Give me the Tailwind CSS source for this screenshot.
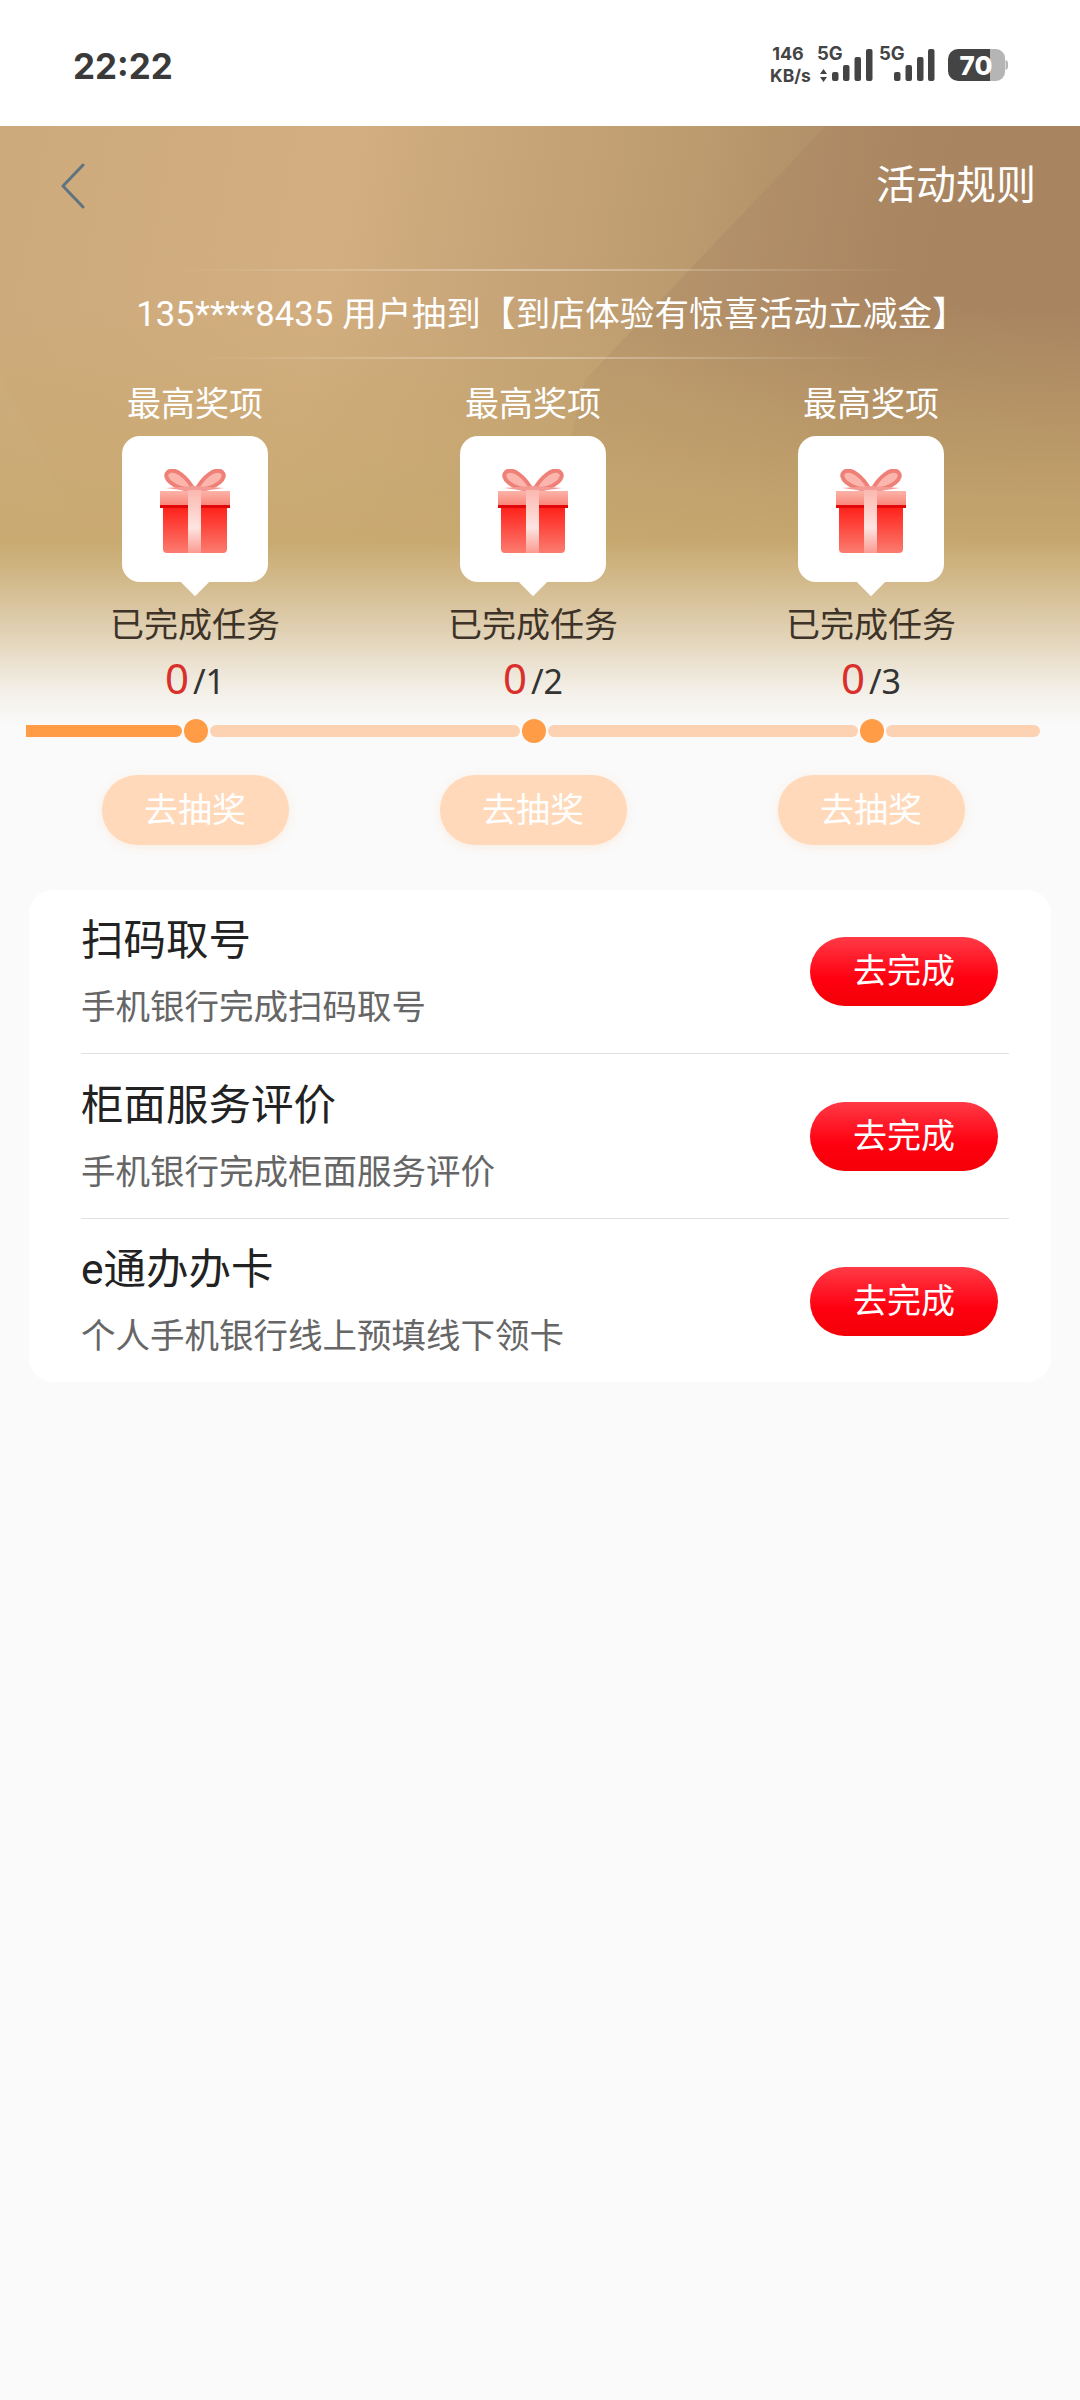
<!DOCTYPE html>
<html lang="zh-CN">
<head>
  <meta charset="UTF-8" />
  <meta name="viewport" content="width=device-width, initial-scale=1.0" />
  <title>活动任务</title>
  <script src="https://cdn.jsdelivr.net/npm/@tailwindcss/browser@4"></script>
</head>
<body class="bg-[#fafafa] min-h-[2400px] font-['Roboto','Noto_Sans_CJK_SC',sans-serif]">
  <!-- Status bar -->
  <div class="h-[126px] bg-white flex items-center justify-between pl-[73px] pr-[40px]">
    <span class="text-[35px] font-bold text-[#3a3a3a] font-['Inter','Roboto',sans-serif] mt-[6px]">22:22</span>
    <svg width="300" height="70" viewBox="0 0 300 70" class="mb-[16px]">
      <g fill="#444" font-family="Inter, Roboto, sans-serif" font-weight="700">
        <text x="48" y="40" font-size="18" text-anchor="middle">146</text>
        <text x="50.5" y="62" font-size="17.5" text-anchor="middle">KB/s</text>
        <text x="77" y="40" font-size="18.5">5G</text>
        <path d="M83.5 49l3.5 5h-7zM83.5 62l3.5-5h-7z"/>
        <rect x="92" y="52" width="6.5" height="9" rx="2"/>
        <rect x="103" y="45" width="6.5" height="16" rx="2"/>
        <rect x="114.5" y="37" width="6.5" height="24" rx="2"/>
        <rect x="126" y="29" width="6.5" height="32" rx="2"/>
        <text x="139" y="40" font-size="18.5">5G</text>
        <rect x="154" y="52" width="6.5" height="9" rx="2"/>
        <rect x="165.5" y="45" width="6.5" height="16" rx="2"/>
        <rect x="177" y="37" width="6.5" height="24" rx="2"/>
        <rect x="188" y="29" width="6.5" height="32" rx="2"/>
      </g>
      <path d="M250 29h6a9 9 0 0 1 9 9v14a9 9 0 0 1-9 9h-6z" fill="#b5b5b5"/>
      <path d="M265.5 40a3 3 0 0 1 2.5 3v4a3 3 0 0 1-2.5 3z" fill="#b5b5b5"/>
      <path d="M250 29h-32a10 10 0 0 0-10 10v12a10 10 0 0 0 10 10h32z" fill="#444"/>
      <text x="236" y="54.5" font-size="26" font-weight="800" fill="#fff" text-anchor="middle" font-family="Inter, Roboto, sans-serif">70</text>
    </svg>
  </div>

  <!-- Hero -->
  <section class="relative h-[600px] bg-[linear-gradient(100deg,#cdaa7c_0%,#d2ae80_30%,#bd9c70_58%,#ab8862_78%,#a98560_100%)]">
    <svg class="absolute inset-0 pointer-events-none" width="1080" height="600" viewBox="0 0 1080 600">
      <defs>
        <linearGradient id="gold" x1="0" y1="0" x2="0" y2="1">
          <stop offset="0.3" stop-color="#c8a96f" stop-opacity="0"/>
          <stop offset="0.72" stop-color="#c8a96f" stop-opacity="1"/>
        </linearGradient>
      </defs>
      <path d="M826 0L585 254L500 600H1080V0z" fill="#a58260" opacity="0.3"/>
      <path d="M0 250L80 400V600H0z" fill="#fff" opacity="0.04"/>
      <rect width="1080" height="600" fill="url(#gold)"/>
    </svg>
    <div class="absolute inset-0 bg-[linear-gradient(180deg,rgba(250,250,250,0)_415px,rgba(250,250,250,0.18)_450px,rgba(250,250,250,0.4)_490px,rgba(250,250,250,0.65)_530px,rgba(250,250,250,0.87)_565px,#fafafa_600px)]"></div>

    <div class="relative">
      <div class="flex items-center justify-between h-[120px] pl-[58px] pr-[44px]">
        <svg width="30" height="46" viewBox="0 0 30 46"><path d="M25 2L5 23l20 21" fill="none" stroke="#5f7480" stroke-width="3" stroke-linecap="round" stroke-linejoin="round"/></svg>
        <span class="text-[40px] text-white">活动规则</span>
      </div>

      <div class="flex flex-col items-center mt-[23px]">
        <div class="w-[750px] h-[2px] bg-[linear-gradient(90deg,transparent,rgba(255,255,255,0.35),transparent)]"></div>
        <p class="h-[86px] leading-[86px] text-[34.5px] tracking-[0.2px] text-white whitespace-nowrap ml-[23px]">135****8435 用户抽到【到店体验有惊喜活动立减金】</p>
        <div class="w-[700px] h-[2px] bg-[linear-gradient(90deg,transparent,rgba(255,255,255,0.35),transparent)]"></div>
      </div>

      <div class="grid grid-cols-3 w-[1014px] ml-[26px] mt-[21px]">
        <div class="flex flex-col items-center">
          <span class="text-[34px] leading-[48px] text-white">最高奖项</span>
          <div class="relative mt-[8px] w-[146px] h-[146px] bg-white rounded-[18px] flex items-center justify-center">
            <svg width="72" height="84" viewBox="0 0 72 84" class="mt-[4px]">
              <defs>
                <linearGradient id="box" x1="0" y1="0" x2="0" y2="1"><stop offset="0" stop-color="#ff1f18"/><stop offset="1" stop-color="#fb7c70"/></linearGradient>
                <linearGradient id="band" x1="0" y1="0" x2="0" y2="1"><stop offset="0" stop-color="#fbb8b0"/><stop offset="0.6" stop-color="#fde4e0"/><stop offset="1" stop-color="#fb9a90"/></linearGradient>
                <linearGradient id="lid" x1="0" y1="0" x2="0" y2="1"><stop offset="0" stop-color="#fbb3a8"/><stop offset="1" stop-color="#fb7d72"/></linearGradient>
              </defs>
              <g id="gift">
                <path d="M35 21C28 8 16-2 9 3c-6 5 4 17 26 18zM37 21C44 8 56-2 63 3c6 5-4 17-26 18z" fill="#fbb5ac" stroke="#ee8078" stroke-width="4"/>
                <path d="M7 19l28-2 30 2-28 4z" fill="#f49a94"/>
                <rect x="1" y="22" width="70" height="17" fill="url(#lid)"/>
                <path d="M4 37h64v43a4 4 0 0 1-4 4H8a4 4 0 0 1-4-4z" fill="url(#box)"/>
                <rect x="1" y="36" width="70" height="3" fill="#e00808"/>
                <rect x="29" y="21" width="13" height="63" fill="url(#band)"/>
              </g>
            </svg>
            <div class="absolute bottom-[-10px] left-1/2 -translate-x-1/2 w-[20px] h-[20px] rotate-45 bg-white"></div>
          </div>
          <span class="mt-[19px] text-[34px] leading-[48px] text-[#3d3328]">已完成任务</span>
          <div class="h-[58px] flex items-baseline text-[#333] font-['Noto_Sans',sans-serif]"><span class="text-[42px] leading-[58px] text-[#d9302c]">0</span><span class="text-[34px] ml-[4px]">/1</span></div>
        </div>
        <div class="flex flex-col items-center">
          <span class="text-[34px] leading-[48px] text-white">最高奖项</span>
          <div class="relative mt-[8px] w-[146px] h-[146px] bg-white rounded-[18px] flex items-center justify-center">
            <svg width="72" height="84" viewBox="0 0 72 84" class="mt-[4px]"><use href="#gift"/></svg>
            <div class="absolute bottom-[-10px] left-1/2 -translate-x-1/2 w-[20px] h-[20px] rotate-45 bg-white"></div>
          </div>
          <span class="mt-[19px] text-[34px] leading-[48px] text-[#3d3328]">已完成任务</span>
          <div class="h-[58px] flex items-baseline text-[#333] font-['Noto_Sans',sans-serif]"><span class="text-[42px] leading-[58px] text-[#d9302c]">0</span><span class="text-[34px] ml-[4px]">/2</span></div>
        </div>
        <div class="flex flex-col items-center">
          <span class="text-[34px] leading-[48px] text-white">最高奖项</span>
          <div class="relative mt-[8px] w-[146px] h-[146px] bg-white rounded-[18px] flex items-center justify-center">
            <svg width="72" height="84" viewBox="0 0 72 84" class="mt-[4px]"><use href="#gift"/></svg>
            <div class="absolute bottom-[-10px] left-1/2 -translate-x-1/2 w-[20px] h-[20px] rotate-45 bg-white"></div>
          </div>
          <span class="mt-[19px] text-[34px] leading-[48px] text-[#3d3328]">已完成任务</span>
          <div class="h-[58px] flex items-baseline text-[#333] font-['Noto_Sans',sans-serif]"><span class="text-[42px] leading-[58px] text-[#d9302c]">0</span><span class="text-[34px] ml-[4px]">/3</span></div>
        </div>
      </div>

      <!-- Progress -->
      <div class="flex items-center w-[1014px] h-[24px] ml-[26px] mt-[12px]">
        <div class="w-[156px] h-[12px] bg-[#ff9c45] rounded-r-[6px]"></div>
        <div class="w-[24px] h-[24px] rounded-full bg-[#ff9c45] mx-[2px] shrink-0"></div>
        <div class="w-[310px] h-[12px] bg-[#fdd2b2] rounded-[6px]"></div>
        <div class="w-[24px] h-[24px] rounded-full bg-[#ff9c45] mx-[2px] shrink-0"></div>
        <div class="w-[310px] h-[12px] bg-[#fdd2b2] rounded-[6px]"></div>
        <div class="w-[24px] h-[24px] rounded-full bg-[#ff9c45] mx-[2px] shrink-0"></div>
        <div class="flex-1 h-[12px] bg-[#fdd2b2] rounded-[6px]"></div>
      </div>
    </div>
  </section>

  <!-- Draw buttons -->
  <div class="grid grid-cols-3 w-[1014px] ml-[26px] mt-[49px]">
    <div class="flex justify-center"><button class="w-[187px] h-[70px] rounded-full bg-[#ffd9b9] text-[34px] text-white shadow-[0_2px_10px_rgba(255,200,150,0.25)]">去抽奖</button></div>
    <div class="flex justify-center"><button class="w-[187px] h-[70px] rounded-full bg-[#ffd9b9] text-[34px] text-white shadow-[0_2px_10px_rgba(255,200,150,0.25)]">去抽奖</button></div>
    <div class="flex justify-center"><button class="w-[187px] h-[70px] rounded-full bg-[#ffd9b9] text-[34px] text-white shadow-[0_2px_10px_rgba(255,200,150,0.25)]">去抽奖</button></div>
  </div>

  <!-- Tasks -->
  <div class="mx-[29px] mt-[45px] bg-white rounded-[24px] h-[492px] pl-[52px] pr-[42px]">
    <div class="flex items-center justify-between h-[164px] border-b border-[#e2e2e2]">
      <div>
        <p class="text-[42.5px] leading-[56px] text-[#222]">扫码取号</p>
        <p class="mt-[15px] text-[34.5px] leading-[46px] text-[#666]">手机银行完成扫码取号</p>
      </div>
      <button class="w-[188px] h-[69px] mr-[11px] rounded-full bg-[linear-gradient(180deg,#ff3a46,#ff0010_60%,#f40008)] text-[34px] text-white">去完成</button>
    </div>
    <div class="flex items-center justify-between h-[165px] border-b border-[#e2e2e2]">
      <div>
        <p class="text-[42.5px] leading-[56px] text-[#222]">柜面服务评价</p>
        <p class="mt-[15px] text-[34.5px] leading-[46px] text-[#666]">手机银行完成柜面服务评价</p>
      </div>
      <button class="w-[188px] h-[69px] mr-[11px] rounded-full bg-[linear-gradient(180deg,#ff3a46,#ff0010_60%,#f40008)] text-[34px] text-white">去完成</button>
    </div>
    <div class="flex items-center justify-between h-[163px]">
      <div>
        <p class="text-[42.5px] leading-[56px] text-[#222]">e通办办卡</p>
        <p class="mt-[15px] text-[34.5px] leading-[46px] text-[#666]">个人手机银行线上预填线下领卡</p>
      </div>
      <button class="w-[188px] h-[69px] mr-[11px] mt-[2px] rounded-full bg-[linear-gradient(180deg,#ff3a46,#ff0010_60%,#f40008)] text-[34px] text-white">去完成</button>
    </div>
  </div>
</body>
</html>
